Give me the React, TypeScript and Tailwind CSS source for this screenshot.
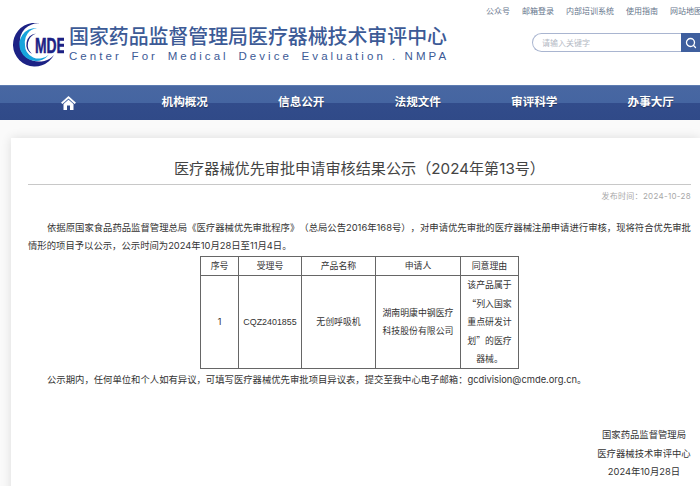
import { Search } from 'lucide-react'

const topLinks = ['公众号', '邮箱登录', '内部培训系统', '使用指南', '网站地图']
const navItems = ['机构概况', '信息公开', '法规文件', '审评科学', '办事大厅']

const cellClass = 'border border-[#666] font-normal'

const Logo = () => (
  <svg width="52" height="44" viewBox="0 0 52 44" className="shrink-0">
    <path d="M28 0.5 A21.8 21.8 0 1 0 42 32 A19 17 0 0 1 8 21 A18 18 0 0 1 28 0.5 Z" fill="#1c2285" />
    <path d="M25 5 A16.5 16.5 0 1 0 37 31.5 A14 13.5 0 0 1 13 21 A14 14 0 0 1 25 5 Z" fill="#18a4dc" />
    <path d="M24 10.5 A11 11 0 0 0 20 31 A12 12 0 0 1 24 10.5 Z" fill="#1c2285" />
    <text
      transform="translate(23 30) scale(0.63 1)"
      fontFamily="'Liberation Sans', sans-serif"
      fontWeight="700"
      fontSize="22"
      stroke="#1c2285"
      strokeWidth="0.5"
      fill="#1c2285"
    >
      MDE
    </text>
  </svg>
)

const App = () => {
  return (
    <div className="h-[486px] w-[700px] overflow-hidden bg-[#fafafa] font-['Inter','Noto_Sans_CJK_SC',sans-serif] text-[#333] [text-spacing-trim:space-all]">
      <header className="flex h-[85px] justify-between bg-white">
        <div className="flex items-start gap-[5px] pl-[12px] pt-[23px]">
          <Logo />
          <div className="pt-[2px]">
            <div className="text-[19.9px] leading-[24px] font-medium text-[#3c5a96] whitespace-nowrap">
              国家药品监督管理局医疗器械技术审评中心
            </div>
            <div className="font-['Liberation_Sans',sans-serif] text-[11.5px] leading-[14px] tracking-[3.05px] [word-spacing:3.5px] text-[#3c5a96] whitespace-nowrap">
              Center For Medical Device Evaluation<span className="[word-spacing:0]"> . </span>NMPA
            </div>
          </div>
        </div>
        <div className="w-[214px] shrink-0 overflow-hidden">
          <div className="flex gap-[12px] pt-[6px] text-[8px] leading-[11px] text-[#66758c] whitespace-nowrap">
            {topLinks.map((link) => (
              <span key={link}>{link}</span>
            ))}
          </div>
          <div className="ml-[46px] mt-[16px] flex h-[19px]">
            <div className="flex w-[150px] items-center rounded-l-full border border-r-0 border-[#a9b5d0] bg-white pl-[9px] text-[8px] text-[#b4b9c4]">
              请输入关键字
            </div>
            <div className="flex w-[19px] items-center justify-center bg-[#3f5f9e]">
              <Search size={12} strokeWidth={2.6} className="text-white" />
            </div>
          </div>
        </div>
      </header>

      <nav className="h-[35px] overflow-hidden border-t border-[#5d7cb1] bg-[linear-gradient(#4867a2_0,#4565a1_50%,#324c8b_50%,#304a88_100%)]">
        <div className="ml-[10px] grid h-full w-[699px] grid-cols-6 items-center text-[11.6px] font-bold text-white [text-shadow:0_1px_1px_rgba(0,0,0,0.35)]">
          <div className="flex justify-center">
            <svg width="15" height="14" viewBox="0 0 15 14" fill="#fff">
              <path d="M7.5 0 L15 6.8 L13.6 8 L7.5 2.6 L1.4 8 L0 6.8 Z" />
              <path d="M2.5 8 L7.5 3.7 L12.5 8 V14 H9 V9.6 H6 V14 H2.5 Z" />
            </svg>
          </div>
          {navItems.map((item) => (
            <div key={item} className="text-center">
              {item}
            </div>
          ))}
        </div>
      </nav>

      <main className="ml-[11px] mt-[18px] h-[400px] bg-white pl-[17px] pr-[9px] shadow-[0_0_10px_rgba(0,0,0,0.12)]">
        <h1 className="border-b border-[#c8c8c8] pt-[21px] pb-[6px] text-center text-[15.15px] leading-[19px] font-normal text-[#444]">
          医疗器械优先审批申请审核结果公示（2024年第13号）
        </h1>
        <div className="pt-[6px] text-right text-[8px] leading-[11px] tracking-[0.3px] text-[#a8a8a8]">
          发布时间：2024-10-28
        </div>
        <p className="mt-[17px] indent-[19px] text-[9.35px] leading-[18px]">
          依据原国家食品药品监督管理总局《医疗器械优先审批程序》（总局公告2016年168号），对申请优先审批的医疗器械注册申请进行审核，现将符合优先审批
          <br />
          情形的项目予以公示，公示时间为2024年10月28日至11月4日。
        </p>
        <table className="ml-[172px] mt-[1px] w-[318px] table-fixed border-collapse text-center text-[8.9px] leading-[18.4px]">
          <colgroup>
            <col className="w-[38px]" />
            <col className="w-[63px]" />
            <col className="w-[74px]" />
            <col className="w-[85px]" />
            <col className="w-[58px]" />
          </colgroup>
          <thead>
            <tr className="h-[18px]">
              <th className={cellClass}>序号</th>
              <th className={cellClass}>受理号</th>
              <th className={cellClass}>产品名称</th>
              <th className={cellClass}>申请人</th>
              <th className={cellClass}>同意理由</th>
            </tr>
          </thead>
          <tbody>
            <tr>
              <td className={cellClass}>1</td>
              <td className={`${cellClass} font-['Liberation_Sans',sans-serif]`}>CQZ2401855</td>
              <td className={cellClass}>无创呼吸机</td>
              <td className={`${cellClass} px-[6px]`}>
                湖南明康中钢医疗
                <br />
                科技股份有限公司
              </td>
              <td className={`${cellClass} font-['Noto_Sans_CJK_SC',sans-serif]`}>
                该产品属于
                <br />
                “列入国家
                <br />
                重点研发计
                <br />
                划”的医疗
                <br />
                器械。
              </td>
            </tr>
          </tbody>
        </table>
        <p className="mt-[2px] indent-[19px] text-[9.35px] leading-[18px]">
          公示期内，任何单位和个人如有异议，可填写医疗器械优先审批项目异议表，提交至我中心电子邮箱：gcdivision@cmde.org.cn。
        </p>
        <div className="mt-[37px] ml-auto w-[94px] text-center text-[9.35px] leading-[18.5px] whitespace-nowrap">
          <div>国家药品监督管理局</div>
          <div>医疗器械技术审评中心</div>
          <div>2024年10月28日</div>
        </div>
      </main>
    </div>
  )
}

export default App
